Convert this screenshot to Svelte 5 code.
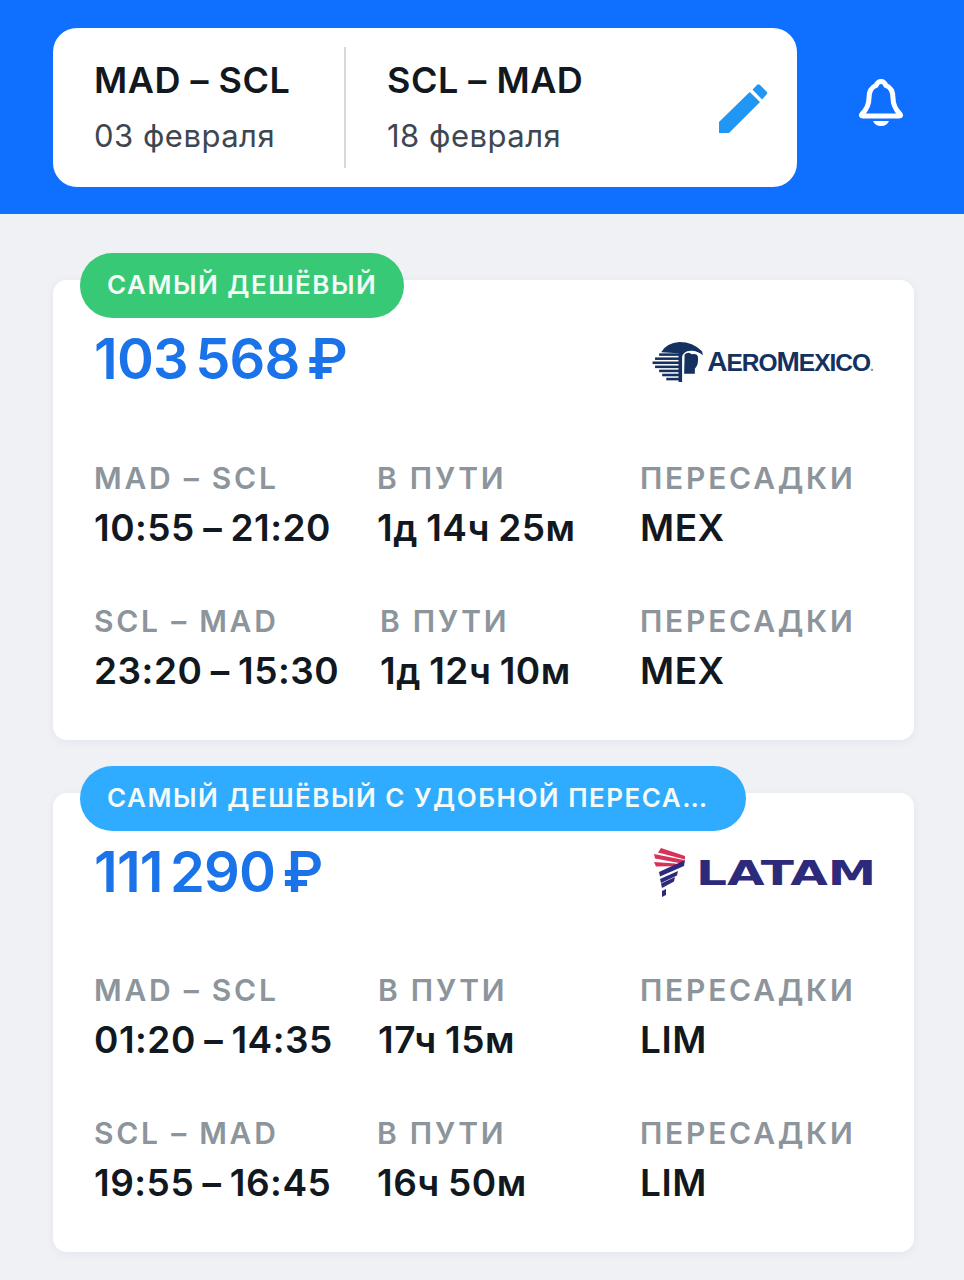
<script lang="ts">
	const offers = [
		{
			badge: 'САМЫЙ ДЕШЁВЫЙ',
			tone: 'green',
			price: '103 568 ₽',
			airline: 'aeromexico',
			legs: [
				{ route: 'MAD – SCL', time: '10:55 – 21:20', dur: '1д 14ч 25м', stops: 'MEX', mid: 283 },
				{ route: 'SCL – MAD', time: '23:20 – 15:30', dur: '1д 12ч 10м', stops: 'MEX', mid: 286 }
			]
		},
		{
			badge: 'САМЫЙ ДЕШЁВЫЙ С УДОБНОЙ ПЕРЕСА…',
			tone: 'blue',
			price: '111 290 ₽',
			airline: 'latam',
			legs: [
				{ route: 'MAD – SCL', time: '01:20 – 14:35', dur: '17ч 15м', stops: 'LIM', mid: 284 },
				{ route: 'SCL – MAD', time: '19:55 – 16:45', dur: '16ч 50м', stops: 'LIM', mid: 283 }
			]
		}
	];
</script>

<div class="page">
	<header class="top">
		<div class="search">
			<div class="trip">
				<div class="route">MAD – SCL</div>
				<div class="date">03 февраля</div>
			</div>
			<div class="sep"></div>
			<div class="trip second">
				<div class="route">SCL – MAD</div>
				<div class="date">18 февраля</div>
			</div>
			<svg class="pencil" width="50" height="52" viewBox="0 0 50 52">
				<path d="M0 39 L30.700 9 L41 19 L10 50 L0 50 Z" fill="#2196f3" />
				<path d="M33.500 6.500 L38 2 Q39.500 0.700 41 2 L47.500 8.500 Q49 10 47.500 11.500 L43 16.500 Z" fill="#2196f3" />
			</svg>
		</div>
		<svg class="bell" width="46" height="50" viewBox="0 0 46 50">
			<path
				d="M23 3.500 C25.500 3.500 27 5 28 7.500 C33.500 9.500 35 15 35 20 C35 27 37 31 42 36 Q43.500 38 41.500 38 L4.500 38 Q2.500 38 4 36 C9 31 11 27 11 20 C11 15 12.500 9.500 18 7.500 C19 5 20.500 3.500 23 3.500 Z"
				fill="none"
				stroke="#fff"
				stroke-width="5"
				stroke-linejoin="round"
			/>
			<path d="M15 43 L31 43 Q29 48 23 48 Q17 48 15 43 Z" fill="#fff" />
		</svg>
	</header>

	<main class="list">
		{#each offers as offer}
			<section class="card">
				<div class="badge {offer.tone}">{offer.badge}</div>
				<div class="head">
					<div class="price">{offer.price}</div>
					{#if offer.airline === 'aeromexico'}
						<div class="logo aero">
							<svg width="51" height="40" viewBox="0 0 50 39">
								<g fill="#14315f">
									<path d="M9 10 Q14 1 27 0 Q40 0 49 9 L50 13 Q44 8 38 8.500 Q30 9 29.500 15 L29.500 39 L26 39 L26 11 Z" />
									<path d="M32 12 Q36 9 39 12 Q44 11 45 14 Q46 22 42 26 L42 31 L31.500 31 Z" />
									<rect x="7" y="11" width="20" height="2.500" />
									<rect x="3" y="15" width="24" height="2.500" />
									<rect x="0.500" y="19" width="26" height="2.500" />
									<rect x="3" y="23" width="24" height="2.500" />
									<rect x="7" y="27" width="20" height="2.500" />
									<rect x="10" y="31" width="17" height="2.500" />
									<rect x="14" y="35" width="13" height="2.500" />
								</g>
							</svg>
							<span class="aero-name"><b>A</b>ERO<b>M</b>EXICO<i>.</i></span>
						</div>
					{:else}
						<div class="logo latam">
							<svg width="36" height="52" viewBox="0 0 36 52">
								<path d="M8 1 L32 9 L32 12.500 L5 5.500 Z" fill="#d9325a" />
								<path d="M1 7 L31 13 L29 16.500 L2 11.500 Z" fill="#d9325a" />
								<path d="M1 15 L22 16.500 L30 19 L3 19.500 Z" fill="#d9325a" />
								<path d="M32 13 L31 19 L7 29.500 L6 25 Z" fill="#2d2a7c" />
								<path d="M25 24 L24 28.500 L8 36 L7 32 Z" fill="#2d2a7c" />
								<path d="M22 30 L21 34.500 L9 41 L8 36.500 Z" fill="#2d2a7c" />
								<path d="M9 44 L13 42 L13 48 L9 50 Z" fill="#2d2a7c" />
							</svg>
							<span>LATAM</span>
						</div>
					{/if}
				</div>
				<div class="legs">
					{#each offer.legs as leg}
						<div class="leg" style="grid-template-columns: {leg.mid}px {546 - leg.mid}px 1fr">
							<div>
								<div class="label">{leg.route}</div>
								<div class="value">{leg.time}</div>
							</div>
							<div>
								<div class="label">В ПУТИ</div>
								<div class="value">{leg.dur}</div>
							</div>
							<div>
								<div class="label">ПЕРЕСАДКИ</div>
								<div class="value">{leg.stops}</div>
							</div>
						</div>
					{/each}
				</div>
			</section>
		{/each}
	</main>
</div>

<style>
	:global(body) {
		margin: 0;
		background: #eff1f5;
	}
	.page {
		width: 964px;
		height: 1280px;
		overflow: hidden;
		font-family: Inter, 'Noto Sans', sans-serif;
		color: #111820;
	}
	.top {
		height: 214px;
		box-sizing: border-box;
		background: #0f6fff;
		padding: 28px 60px 0 53px;
		display: flex;
		justify-content: space-between;
		align-items: flex-start;
	}
	.search {
		width: 744px;
		height: 159px;
		box-sizing: border-box;
		background: #fff;
		border-radius: 24px;
		display: flex;
		align-items: center;
		padding-left: 41px;
		position: relative;
	}
	.trip {
		width: 250px;
		margin-top: -2px;
	}
	.trip.second {
		margin-left: 41px;
	}
	.route {
		font-size: 36px;
		font-weight: 600;
		line-height: 44px;
		letter-spacing: 0.5px;
	}
	.date {
		font-size: 31px;
		line-height: 38px;
		margin-top: 15px;
		color: #3d4752;
		letter-spacing: 0.5px;
	}
	.sep {
		width: 2px;
		height: 121px;
		background: #d5d8dc;
	}
	.pencil {
		position: absolute;
		right: 28px;
		top: 55px;
	}
	.bell {
		margin-top: 50px;
	}
	.list {
		padding: 66px 50px 0 53px;
		display: flex;
		flex-direction: column;
		gap: 53px;
	}
	.card {
		position: relative;
		height: 460px;
		box-sizing: border-box;
		background: #fff;
		border-radius: 14px;
		padding: 0 41px;
		box-shadow: 0 2px 10px rgba(30, 50, 90, 0.06);
	}
	.card + .card {
		height: 459px;
	}
	.badge {
		position: absolute;
		left: 27px;
		top: -27px;
		height: 65px;
		line-height: 63px;
		padding: 0 27px;
		border-radius: 33px;
		color: #f4fbf7;
		font-size: 26px;
		font-weight: 600;
		letter-spacing: 1.500px;
		white-space: nowrap;
	}
	.badge.green {
		background: #38c976;
	}
	.badge.blue {
		background: #2fabff;
		padding-right: 37px;
	}
	.head {
		height: 180px;
		display: flex;
		justify-content: space-between;
		align-items: flex-start;
	}
	.card + .card .head {
		height: 179px;
	}
	.price {
		margin-top: 46px;
		font-size: 56px;
		line-height: 66px;
		font-weight: 600;
		color: #1a73e8;
		letter-spacing: -0.800px;
		word-spacing: -6px;
	}
	.logo {
		display: flex;
		align-items: center;
		height: 60px;
		margin-top: 52px;
	}
	.aero {
		gap: 4px;
		color: #14315f;
	}
	.aero-name {
		font-family: 'Liberation Sans', sans-serif;
		font-weight: 700;
		font-size: 24.500px;
		letter-spacing: -1px;
		white-space: nowrap;
	}
	.aero-name b {
		font-size: 28px;
	}
	.aero-name i {
		font-size: 14px;
		font-style: normal;
		color: #8a94a6;
	}
	.latam {
		gap: 7px;
		margin-top: 50px;
		color: #2d2a7c;
		font-family: 'DejaVu Sans', sans-serif;
		font-size: 34px;
		font-weight: 700;
	}
	.latam span {
		width: 121px;
		transform: scaleX(1.43);
		transform-origin: left center;
		margin-right: 56px;
		white-space: nowrap;
	}
	.legs {
		display: flex;
		flex-direction: column;
		gap: 53px;
	}
	.leg {
		display: grid;
	}
	.label {
		font-size: 30px;
		line-height: 36px;
		font-weight: 600;
		color: #8c949c;
		letter-spacing: 2.750px;
	}
	.value {
		font-size: 37px;
		line-height: 44px;
		font-weight: 600;
		margin-top: 10px;
		letter-spacing: 0.5px;
		word-spacing: -1.500px;
	}
</style>
